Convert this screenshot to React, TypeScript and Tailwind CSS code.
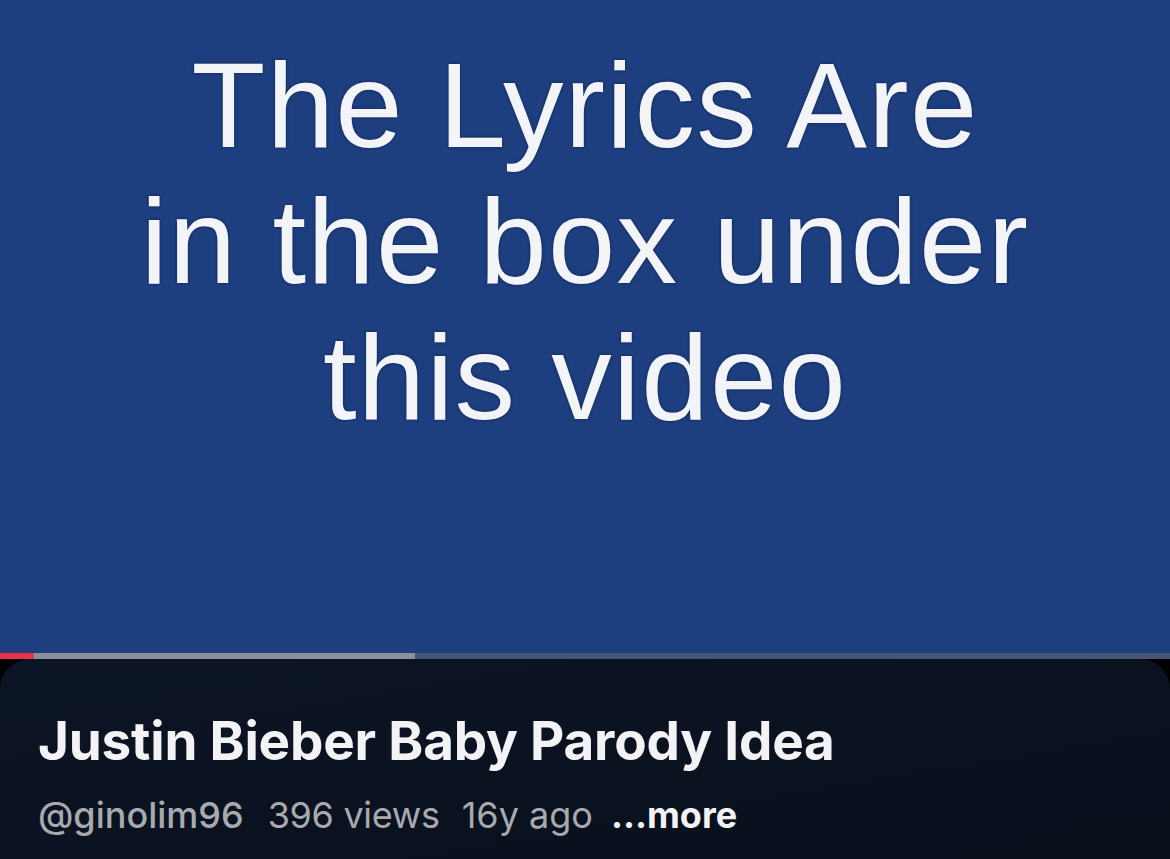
import React from "react";

export default function App() {
  return (
    <div className="w-[1170px] h-[859px] bg-black overflow-hidden flex flex-col">
      <div className="h-[653px] bg-[#1d3e7f] flex flex-col items-center pt-[37px]">
        <div
          className="text-[121px] leading-[136px] text-[#f2f4f8] text-center tracking-[1.3px]"
          style={{ fontFamily: '"Liberation Sans", Arial, sans-serif', textShadow: "0 0 3px rgba(0,0,30,0.5)" }}
        >
          <div>The Lyrics Are</div>
          <div>in the box under</div>
          <div>this video</div>
        </div>
      </div>
      <div className="h-[6px] flex bg-[#475677]">
        <div className="w-[34px] bg-[#e8334a]" />
        <div className="w-[381px] bg-[#8a909c]" />
      </div>
      <div
        className="flex-1 rounded-t-[30px] bg-gradient-to-br from-[#0c1526] to-[#090f1b] pl-[38px] pt-[50px] flex flex-col"
        style={{ fontFamily: 'Inter, "Noto Sans", sans-serif' }}
      >
        <div className="text-[53px] leading-[64px] font-bold text-[#f3f3f5] tracking-[-0.2px]">
          Justin Bieber Baby Parody Idea
        </div>
        <div className="mt-[22px] flex items-baseline text-[36px] leading-[40px] text-[#a9aaae]">
          <span className="font-medium">@ginolim96</span>
          <span className="ml-[24px] tracking-[-0.3px]">396 views</span>
          <span className="ml-[22px]">16y ago</span>
          <span className="ml-[18px] font-bold text-[#f3f3f5]">...more</span>
        </div>
      </div>
    </div>
  );
}
